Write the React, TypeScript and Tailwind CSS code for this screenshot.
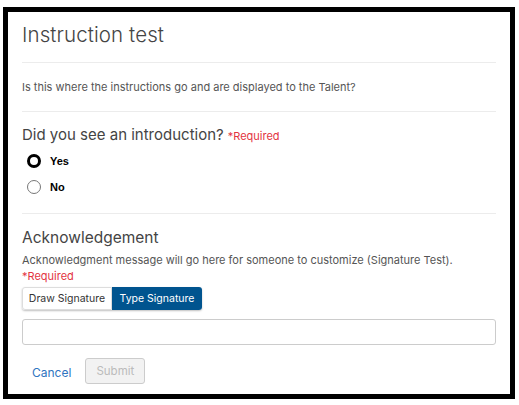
import { useState } from "react";

const font = { fontFamily: "Inter, 'Noto Sans', sans-serif" };

export default function App() {
  const [answer, setAnswer] = useState("yes");
  const [mode, setMode] = useState("type");

  return (
    <div className="bg-white w-[519px] h-[405px] pt-[7px] pl-[3px]" style={font}>
      <div className="w-[512px] h-[392px] border-[5px] border-black bg-white px-[14px]">
        {/* header */}
        <h1 className="text-[20.5px] font-light text-[#444] h-[50px] pb-[4px] flex items-center tracking-[0.1px]">
          Instruction test
        </h1>
        <div className="border-t border-[#ececec]" />
        <p className="text-[11px] text-[#555] h-[48px] flex items-center">
          Is this where the instructions go and are displayed to the Talent?
        </p>
        <div className="border-t border-[#ececec]" />

        {/* question */}
        <div className="pt-[12px] pb-[19px]">
          <div className="flex items-baseline gap-[4px] text-[#444] h-[22px]">
            <span className="text-[15px]">Did you see an introduction?</span>
            <span className="text-[11px] text-[#e3343f]">*Required</span>
          </div>
          <div className="mt-[8px] flex flex-col gap-[12px] pl-[5px]">
            {[
              { id: "yes", label: "Yes" },
              { id: "no", label: "No" },
            ].map((o) => (
              <label
                key={o.id}
                className="flex items-center gap-[9px] h-[14px] cursor-pointer"
                onClick={() => setAnswer(o.id)}
              >
                <span
                  className={
                    answer === o.id
                      ? "w-[14px] h-[14px] rounded-full border-[3px] border-black"
                      : "w-[14px] h-[14px] rounded-full border border-[#777]"
                  }
                />
                <span
                  className="text-[11px] leading-[14px] font-bold text-black"
                  style={{ fontFamily: "'Liberation Sans', Arial, sans-serif" }}
                >
                  {o.label}
                </span>
              </label>
            ))}
          </div>
        </div>
        <div className="border-t border-[#ececec]" />

        {/* acknowledgement */}
        <div className="pt-[13px]">
          <h2 className="text-[15.5px] leading-[22px] text-[#444]">Acknowledgement</h2>
          <p className="mt-[3px] text-[11px] leading-[16px] text-[#555]">
            Acknowledgment message will go here for someone to customize (Signature Test).
          </p>
          <p className="text-[11px] leading-[16px] text-[#e3343f]">*Required</p>
          <div className="inline-flex rounded-[3px] shadow-[0_1px_2px_rgba(0,0,0,0.25)]">
            <button
              onClick={() => setMode("draw")}
              className={
                mode === "draw"
                  ? "w-[90px] h-[23px] text-[10.5px] bg-[#00548f] text-white rounded-l-[3px]"
                  : "w-[90px] h-[23px] text-[10.5px] bg-white text-[#333] border border-[#ddd] rounded-l-[3px]"
              }
            >
              Draw Signature
            </button>
            <button
              onClick={() => setMode("type")}
              className={
                mode === "type"
                  ? "w-[90px] h-[23px] text-[10.5px] bg-[#00548f] text-white rounded-r-[3px]"
                  : "w-[90px] h-[23px] text-[10.5px] bg-white text-[#333] border border-[#ddd] rounded-r-[3px]"
              }
            >
              Type Signature
            </button>
          </div>
          <input className="mt-[9px] block w-full h-[26px] border border-[#ccc] rounded-[3px] px-2 text-[11px] outline-none" />
          <div className="mt-[13px] flex items-center gap-[14px] pl-[10px]">
            <button className="text-[12px] text-[#2f74c0] pt-[3px]">Cancel</button>
            <button
              disabled
              className="w-[60px] h-[26px] text-[11.5px] text-[#bbb] bg-[#f2f2f2] border border-[#ccc] rounded-[3px]"
            >
              Submit
            </button>
          </div>
        </div>
      </div>
    </div>
  );
}
